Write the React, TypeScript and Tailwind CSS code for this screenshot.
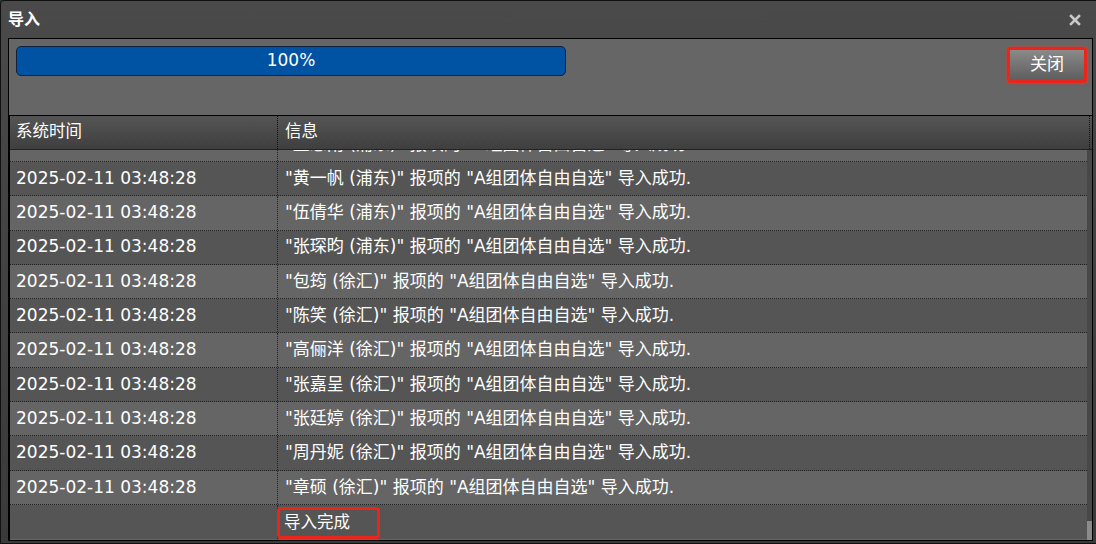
import React from "react";

const font = { fontFamily: '"DejaVu Sans", "Noto Sans CJK SC", sans-serif' };

const names: string[] = [
  "董思雨 (浦东)",
  "黄一帆 (浦东)",
  "伍倩华 (浦东)",
  "张琛昀 (浦东)",
  "包筠 (徐汇)",
  "陈笑 (徐汇)",
  "高俪洋 (徐汇)",
  "张嘉呈 (徐汇)",
  "张廷婷 (徐汇)",
  "周丹妮 (徐汇)",
  "章硕 (徐汇)",
];

export default function App() {
  return (
    <div
      className="w-[1096px] h-[544px] bg-[#333] overflow-hidden text-white"
      style={font}
    >
      <div className="w-[1100px] h-[544px] flex flex-col bg-gradient-to-b from-[#4a4a4a] to-[#3a3a3a] border border-[#111] rounded-tl-[4px]">
        {/* title bar */}
        <div className="h-[37px] shrink-0 flex items-center justify-between pl-[7px] pr-[18px]">
          <span className="text-[16px] font-bold leading-none">导入</span>
          <svg width="12" height="12" viewBox="0 0 12 12" className="mt-[1px]">
            <path d="M2 2 L10 10 M10 2 L2 10" stroke="#c8c8c8" strokeWidth="2.6" strokeLinecap="square" />
          </svg>
        </div>
        {/* body */}
        <div className="ml-[7px] w-[1085px] h-[503px] border border-black bg-[#666] flex flex-col">
          <div className="h-[76px] shrink-0 flex items-start justify-between pl-[7px] pr-[5px] pt-[7px]">
            <div className="w-[550px] h-[30px] rounded-[5px] border border-[#10213f] bg-[#0052a2] flex items-center justify-center text-[17px]">
              100%
            </div>
            <div className="mt-[1px] p-[3px] rounded-[4px] bg-[#e8261c] shadow-[0_0_3px_#ff3020]">
              <button className="w-[74px] h-[30px] flex items-center justify-center text-[17px] text-white bg-gradient-to-b from-[#8a8a8a] to-[#5e5e5e]">
                关闭
              </button>
            </div>
          </div>
          {/* table */}
          <div className="flex-1 min-h-0 border-t border-black border-l flex flex-col">
            <div className="h-[34px] shrink-0 flex bg-gradient-to-b from-[#555] to-[#3f3f3f] border-b border-[#222] text-[16.5px]">
              <div className="w-[268px] shrink-0 border-r border-dotted border-[#111] flex items-center pl-[6px]">系统时间</div>
              <div className="flex-1 flex items-center pl-[7px] border-r border-dotted border-[#111] mr-[2px]">信息</div>
            </div>
            <div className="flex-1 min-h-0 flex overflow-hidden">
              <div className="flex-1 min-w-0 overflow-hidden">
                <div className="mt-[-22.3px]">
                  {names.map((n, i) => (
                    <div
                      key={i}
                      className={`h-[34.3px] flex border-b border-dotted border-[#222] text-[17px] ${i % 2 === 0 ? "bg-[#656565]" : "bg-[#555]"}`}
                    >
                      <div className="w-[268px] shrink-0 border-r border-dotted border-[#222] flex items-center pl-[6px]">
                        2025-02-11 03:48:28
                      </div>
                      <div className="flex-1 flex items-center pl-[7px] whitespace-nowrap">
                        "{n}" 报项的 "A组团体自由自选" 导入成功.
                      </div>
                    </div>
                  ))}
                  <div className="h-[34.3px] flex bg-[#555] text-[16.5px]">
                    <div className="w-[268px] shrink-0 border-r border-dotted border-[#222]"></div>
                    <div className="flex-1 flex items-stretch pt-[2px]">
                      <div className="w-[103px] -ml-[1px] border-[3px] border-[#e8261c] rounded-[4px] flex items-center pl-[4px]">
                        导入完成
                      </div>
                    </div>
                  </div>
                </div>
              </div>
              <div className="w-[5px] shrink-0 bg-[#484848] flex flex-col justify-end">
                <div className="h-[19px] bg-[#8a8a8a]"></div>
              </div>
            </div>
          </div>
        </div>
      </div>
    </div>
  );
}
